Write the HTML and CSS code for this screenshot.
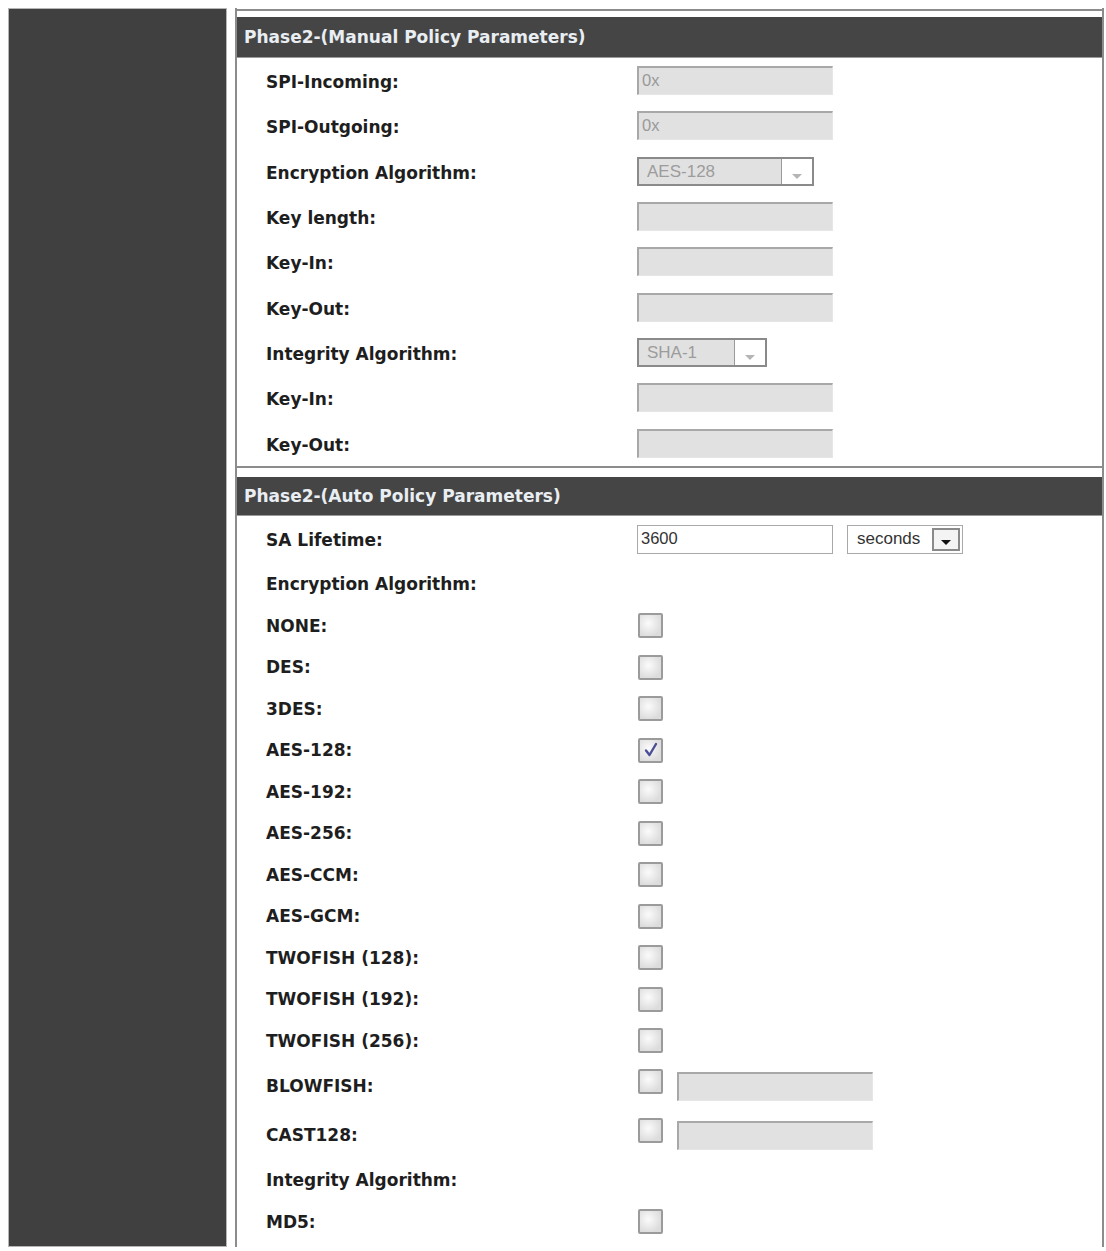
FILE: index.html
```html
<!DOCTYPE html>
<html lang="en">
<head>
  <meta charset="UTF-8" />
  <title>IPSec Policy</title>
  <link rel="stylesheet" href="styles.css">
</head>
<body>
  <div class="page">
    <div class="sidebar"></div>

    <div class="panel">
      <div class="section">
        <div class="section-head">Phase2-(Manual Policy Parameters)</div>
        <div class="rows manual">
          <div class="row"><div class="label">SPI-Incoming:</div><div class="value"><span class="field">0x</span></div></div>
          <div class="row"><div class="label">SPI-Outgoing:</div><div class="value"><span class="field">0x</span></div></div>
          <div class="row"><div class="label">Encryption Algorithm:</div><div class="value"><span class="select off wide">AES-128<span class="drop"><span class="arrow"></span></span></span></div></div>
          <div class="row"><div class="label">Key length:</div><div class="value"><span class="field"></span></div></div>
          <div class="row"><div class="label">Key-In:</div><div class="value"><span class="field"></span></div></div>
          <div class="row"><div class="label">Key-Out:</div><div class="value"><span class="field"></span></div></div>
          <div class="row"><div class="label">Integrity Algorithm:</div><div class="value"><span class="select off narrow">SHA-1<span class="drop"><span class="arrow"></span></span></span></div></div>
          <div class="row"><div class="label">Key-In:</div><div class="value"><span class="field"></span></div></div>
          <div class="row"><div class="label">Key-Out:</div><div class="value"><span class="field"></span></div></div>
        </div>
      </div>

      <div class="section">
        <div class="section-head">Phase2-(Auto Policy Parameters)</div>
        <div class="rows auto">
          <div class="row tall">
            <div class="label">SA Lifetime:</div>
            <div class="value">
              <span class="field live">3600</span>
              <span class="select units">seconds<span class="drop dark"><span class="arrow"></span></span></span>
            </div>
          </div>
          <div class="row"><div class="label">Encryption Algorithm:</div><div class="value"></div></div>
          <div class="row"><div class="label">NONE:</div><div class="value"><span class="chk"></span></div></div>
          <div class="row"><div class="label">DES:</div><div class="value"><span class="chk"></span></div></div>
          <div class="row"><div class="label">3DES:</div><div class="value"><span class="chk"></span></div></div>
          <div class="row"><div class="label">AES-128:</div><div class="value">
            <span class="chk on"><svg width="16" height="16" viewBox="0 0 16 16"><path d="M3 8.5 L6.5 13 L13 2" fill="none" stroke="#4b4f98" stroke-width="2.4" stroke-linecap="round" stroke-linejoin="round"/></svg></span>
          </div></div>
          <div class="row"><div class="label">AES-192:</div><div class="value"><span class="chk"></span></div></div>
          <div class="row"><div class="label">AES-256:</div><div class="value"><span class="chk"></span></div></div>
          <div class="row"><div class="label">AES-CCM:</div><div class="value"><span class="chk"></span></div></div>
          <div class="row"><div class="label">AES-GCM:</div><div class="value"><span class="chk"></span></div></div>
          <div class="row"><div class="label">TWOFISH (128):</div><div class="value"><span class="chk"></span></div></div>
          <div class="row"><div class="label">TWOFISH (192):</div><div class="value"><span class="chk"></span></div></div>
          <div class="row"><div class="label">TWOFISH (256):</div><div class="value"><span class="chk"></span></div></div>
          <div class="row keyed"><div class="label">BLOWFISH:</div><div class="value"><span class="chk"></span><span class="field"></span></div></div>
          <div class="row keyed"><div class="label">CAST128:</div><div class="value"><span class="chk"></span><span class="field"></span></div></div>
          <div class="row"><div class="label">Integrity Algorithm:</div><div class="value"></div></div>
          <div class="row"><div class="label">MD5:</div><div class="value"><span class="chk"></span></div></div>
        </div>
      </div>
    </div>
  </div>
</body>
</html>
```

FILE: styles.css
```css
body {
  margin: 0;
  padding: 0;
  background: #fff;
  font-family: "DejaVu Sans", Verdana, sans-serif;
  color: #1e1e1e;
}
.page {
  display: flex;
  height: 1239px;
  padding: 8px 2px 0 8px;
  overflow: hidden;
}
.sidebar {
  width: 217px;
  flex: none;
  background: #404040;
  border: 1px solid #b5b5b5;
}
.panel {
  flex: 1;
  margin-left: 8px;
  padding-top: 1px;
  border-left: 2px solid #8c8c8c;
  border-right: 2px solid #8c8c8c;
}
.section {
  border-top: 2px solid #8c8c8c;
  padding-top: 6px;
}
.section + .section {
  padding-top: 9px;
}
.section-head {
  height: 40px;
  line-height: 40px;
  background: #454545;
  color: #e9eef2;
  font-weight: bold;
  font-size: 17px;
  padding-left: 7px;
  border-bottom: 1px solid #9a9a9a;
}
.section + .section .section-head {
  height: 38px;
  line-height: 38px;
}
.rows {
  padding-left: 29px;
}
.row {
  display: grid;
  grid-template-columns: 371px 1fr;
  align-items: center;
  height: 45.3px;
}
.manual .row .label {
  padding-top: 3px;
}
.auto .row {
  height: 41.5px;
}
.auto .row.tall {
  height: 48px;
}
.auto .row.keyed {
  height: 49px;
}
.label {
  font-weight: bold;
  font-size: 17px;
}
.value {
  display: flex;
  align-items: center;
  gap: 14px;
}
.field {
  display: inline-block;
  box-sizing: border-box;
  width: 196px;
  height: 29px;
  line-height: 25px;
  padding-left: 3px;
  background: #e1e1e1;
  border-top: 2px solid #a8a8a8;
  border-left: 2px solid #a8a8a8;
  border-right: 1px solid #e6e6e6;
  border-bottom: 1px solid #e6e6e6;
  font-family: "Liberation Sans", Arial, sans-serif;
  font-size: 16.5px;
  color: #9a9a9a;
}
.field.live {
  background: #fff;
  border: 1px solid #a9a9a9;
  color: #333;
  line-height: 25px;
}
.select {
  position: relative;
  display: inline-block;
  box-sizing: border-box;
  height: 29px;
  line-height: 25px;
  padding-left: 8px;
  border: 2px solid #8a8a8a;
  background: #e1e1e1;
  font-family: "Liberation Sans", Arial, sans-serif;
  font-size: 17px;
  color: #9c9c9c;
}
.select.wide { width: 177px; }
.select.narrow { width: 130px; }
.select.units {
  width: 116px;
  background: #fff;
  border: 1px solid #a9a9a9;
  color: #333;
  padding-left: 9px;
  line-height: 25px;
}
.drop {
  position: absolute;
  top: 0;
  right: 0;
  bottom: 0;
  width: 30px;
  background: #fff;
  border-left: 1px solid #9a9a9a;
}
.drop .arrow {
  position: absolute;
  left: 10px;
  bottom: 5px;
  border-left: 5px solid transparent;
  border-right: 5px solid transparent;
  border-top: 5px solid #b5b5b5;
}
.drop.dark {
  top: 2px;
  right: 2px;
  bottom: 2px;
  width: 28px;
  box-sizing: border-box;
  border: 2px solid #8a8a8a;
  background: #f4f4f4;
}
.drop.dark .arrow {
  left: 7px;
  bottom: 4px;
  border-top-color: #111;
}
.chk {
  display: inline-flex;
  align-items: center;
  justify-content: center;
  box-sizing: border-box;
  width: 25px;
  height: 25px;
  margin-left: 1px;
  border: 2px solid #9b9b9b;
  border-radius: 2px;
  background: radial-gradient(circle at 40% 40%, #fbfbfb, #dcdcdc 75%);
}
.keyed .chk {
  margin-bottom: 9px;
}
```
